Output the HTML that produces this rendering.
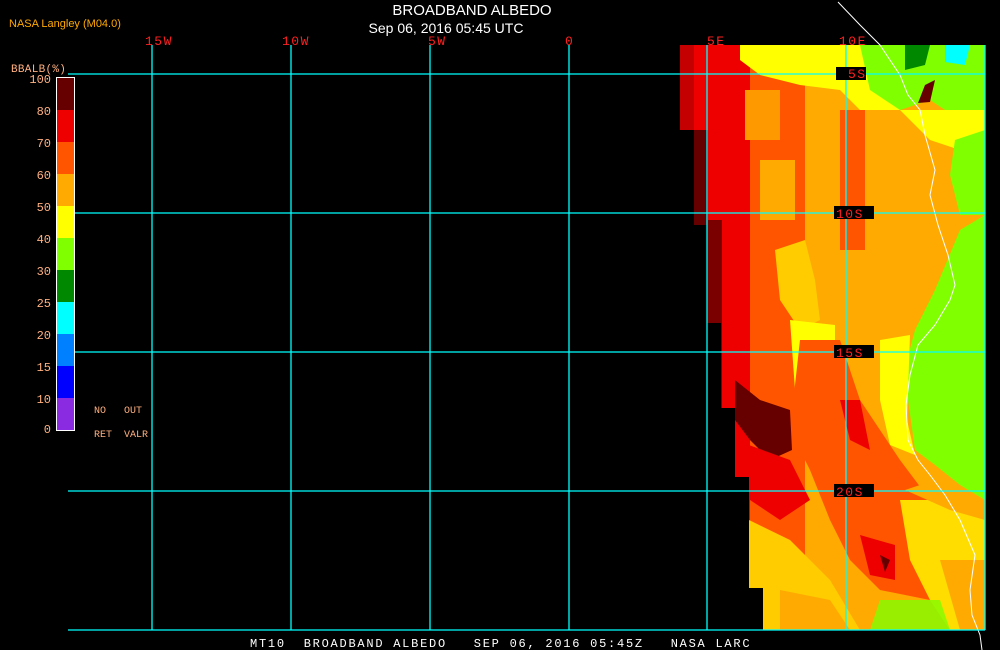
<!DOCTYPE html>
<html><head><meta charset="utf-8"><style>
html,body{margin:0;padding:0;background:#000;width:1000px;height:650px;overflow:hidden}
svg{display:block}
text{font-family:"Liberation Mono","DejaVu Sans Mono",monospace}
</style></head><body>
<svg width="1000" height="650" viewBox="0 0 1000 650" xmlns="http://www.w3.org/2000/svg">
<rect width="1000" height="650" fill="#000"/>
<defs>
<clipPath id="land"><path d="M680 45 H985 V630 H763 V588 H749 V477 H735 V408 H721 V323 H707 V225 H694 V130 H680 Z"/></clipPath>
</defs>
<g clip-path="url(#land)">
<rect x="660" y="40" width="330" height="600" fill="#ffaa00"/>
<rect x="680" y="45" width="42" height="600" fill="#ee0000"/>
<rect x="680" y="45" width="14" height="90" fill="#c40000"/>
<rect x="694" y="130" width="14" height="100" fill="#660000"/>
<rect x="707" y="220" width="15" height="400" fill="#7a0000"/>
<rect x="722" y="45" width="28" height="600" fill="#ee0000"/>
<rect x="750" y="45" width="55" height="600" fill="#ff5500"/>
<rect x="745" y="90" width="35" height="50" fill="#ff9900"/>
<rect x="760" y="160" width="35" height="60" fill="#ffaa00"/>
<rect x="820" y="45" width="20" height="420" fill="#ffaa00"/>
<rect x="840" y="110" width="25" height="140" fill="#ff5500"/>
<path d="M775 250 L805 240 L815 280 L820 320 L800 330 L780 300 Z" fill="#ffcc00"/>
<path d="M790 320 L835 325 L835 400 L810 420 L795 390 Z" fill="#ffff00"/>
<!-- north yellow / green -->
<path d="M740 45 H985 V78 L930 80 L900 110 L860 110 L840 90 L800 85 L760 75 L740 60 Z" fill="#ffff00"/>
<path d="M860 45 H985 V115 L960 120 L930 100 L900 110 L870 90 Z" fill="#80ff00"/>
<path d="M905 45 L930 45 L925 65 L905 70 Z" fill="#008800"/>
<path d="M945 45 L970 45 L965 65 L945 62 Z" fill="#00ffff"/>
<path d="M925 85 L935 80 L930 102 L918 103 Z" fill="#660000"/>
<path d="M900 110 L985 110 V140 L960 150 L930 140 Z" fill="#ffff00"/>
<path d="M955 140 L985 130 V215 L960 215 L950 175 Z" fill="#80ff00"/>
<!-- east green -->
<path d="M985 215 V500 L960 485 L935 465 L915 450 L908 400 L907 360 L915 330 L935 290 L960 230 Z" fill="#80ff00"/>
<path d="M880 340 L910 335 L907 420 L915 455 L890 445 L880 400 Z" fill="#ffff00"/>
<!-- diagonal red band -->
<path d="M800 340 L840 340 L860 400 L900 460 L930 500 L955 540 L960 590 L930 600 L880 590 L850 560 L830 520 L810 470 L790 430 Z" fill="#ff5500"/>
<path d="M840 400 L860 400 L870 450 L850 440 Z" fill="#ee0000"/>
<path d="M860 535 L895 545 L895 580 L870 575 Z" fill="#ee0000"/>
<path d="M880 555 L890 560 L885 572 Z" fill="#660000"/>
<!-- west dark blob -->
<path d="M735 380 L760 400 L790 410 L792 450 L770 460 L750 440 L735 420 Z" fill="#660000"/>
<path d="M735 440 L790 460 L810 500 L780 520 L750 500 Z" fill="#ee0000"/>
<!-- south yellow mix -->
<path d="M749 520 L790 540 L830 580 L860 630 H749 Z" fill="#ffcc00"/>
<path d="M780 590 L830 600 L850 630 H780 Z" fill="#ffaa00"/>
<path d="M900 500 L960 500 L985 520 V630 H950 L930 600 L910 560 Z" fill="#ffdd00"/>
<path d="M905 490 L935 480 L985 500 V520 L950 510 Z" fill="#ffaa00"/>
<path d="M940 560 L985 560 V630 H960 Z" fill="#ffaa00"/>
<path d="M880 600 L940 600 L950 630 H870 Z" fill="#80ff00" opacity="0.8"/>
</g>
<polyline points="838,2 860,25 880,45 900,75 908,95 920,110 925,135 935,170 930,195 938,225 948,255 955,285 950,300 935,325 918,345 910,375 906,405 908,440 918,460 930,475 945,495 960,520 975,555 970,590 972,615 980,635 982,650" fill="none" stroke="#fff" stroke-width="1"/>
<g stroke="#00ffff" stroke-width="1.3">
<line x1="152" y1="45" x2="152" y2="630"/><line x1="291" y1="45" x2="291" y2="630"/>
<line x1="430" y1="45" x2="430" y2="630"/><line x1="569" y1="45" x2="569" y2="630"/>
<line x1="707" y1="45" x2="707" y2="630"/><line x1="846" y1="45" x2="846" y2="630"/>
<line x1="985" y1="45" x2="985" y2="630"/>
<line x1="68" y1="74" x2="985" y2="74"/><line x1="68" y1="213" x2="985" y2="213"/>
<line x1="68" y1="352" x2="985" y2="352"/><line x1="68" y1="491" x2="985" y2="491"/>
<line x1="68" y1="630" x2="985" y2="630"/>
</g>
<g fill="#000"><rect x="836" y="67" width="30" height="13"/><rect x="834" y="206" width="40" height="13"/><rect x="834" y="345" width="40" height="13"/><rect x="834" y="484" width="40" height="13"/></g>
<g fill="#ff2020" font-size="13" letter-spacing="1.5">
<text x="848" y="78">5S</text><text x="836" y="218">10S</text><text x="836" y="357">15S</text><text x="836" y="496">20S</text>
<text x="145" y="45">15W</text><text x="282" y="45">10W</text><text x="428" y="45">5W</text><text x="565" y="45">0</text><text x="707" y="45">5E</text><text x="839" y="45">10E</text>
</g>
<text x="472" y="15" fill="#fff" font-size="15" text-anchor="middle" style="font-family:'Liberation Sans',sans-serif">BROADBAND ALBEDO</text>
<text x="446" y="33" fill="#fff" font-size="14" text-anchor="middle" style="font-family:'Liberation Sans',sans-serif">Sep 06, 2016 05:45 UTC</text>
<text x="9" y="27" fill="#ffaa00" font-size="11" style="font-family:'Liberation Sans',sans-serif">NASA Langley (M04.0)</text>
<text x="250" y="647" fill="#fff" font-size="12" letter-spacing="1.75" xml:space="preserve">MT10  BROADBAND ALBEDO   SEP 06, 2016 05:45Z   NASA LARC</text>
<text x="11" y="72" fill="#ffb080" font-size="11" letter-spacing="0.3">BBALB(%)</text>
<rect x="56.5" y="77.5" width="18" height="353" fill="none" stroke="#fff"/>
<g>
<rect x="57" y="78" width="17" height="32" fill="#660000"/>
<rect x="57" y="110" width="17" height="32" fill="#ee0000"/>
<rect x="57" y="142" width="17" height="32" fill="#ff5500"/>
<rect x="57" y="174" width="17" height="32" fill="#ffaa00"/>
<rect x="57" y="206" width="17" height="32" fill="#ffff00"/>
<rect x="57" y="238" width="17" height="32" fill="#80ff00"/>
<rect x="57" y="270" width="17" height="32" fill="#008800"/>
<rect x="57" y="302" width="17" height="32" fill="#00ffff"/>
<rect x="57" y="334" width="17" height="32" fill="#0080ff"/>
<rect x="57" y="366" width="17" height="32" fill="#0000ff"/>
<rect x="57" y="398" width="17" height="32" fill="#8a2be2"/>
</g>
<g fill="#ffb080" font-size="12" text-anchor="end">
<text x="51" y="83">100</text><text x="51" y="115">80</text><text x="51" y="147">70</text><text x="51" y="179">60</text>
<text x="51" y="211">50</text><text x="51" y="243">40</text><text x="51" y="275">30</text><text x="51" y="307">25</text>
<text x="51" y="339">20</text><text x="51" y="371">15</text><text x="51" y="403">10</text><text x="51" y="433">0</text>
</g>
<g fill="#ffb080" font-size="10">
<text x="94" y="413">NO</text><text x="124" y="413">OUT</text>
<text x="94" y="437">RET</text><text x="124" y="437">VALR</text>
</g>
</svg>
</body></html>
